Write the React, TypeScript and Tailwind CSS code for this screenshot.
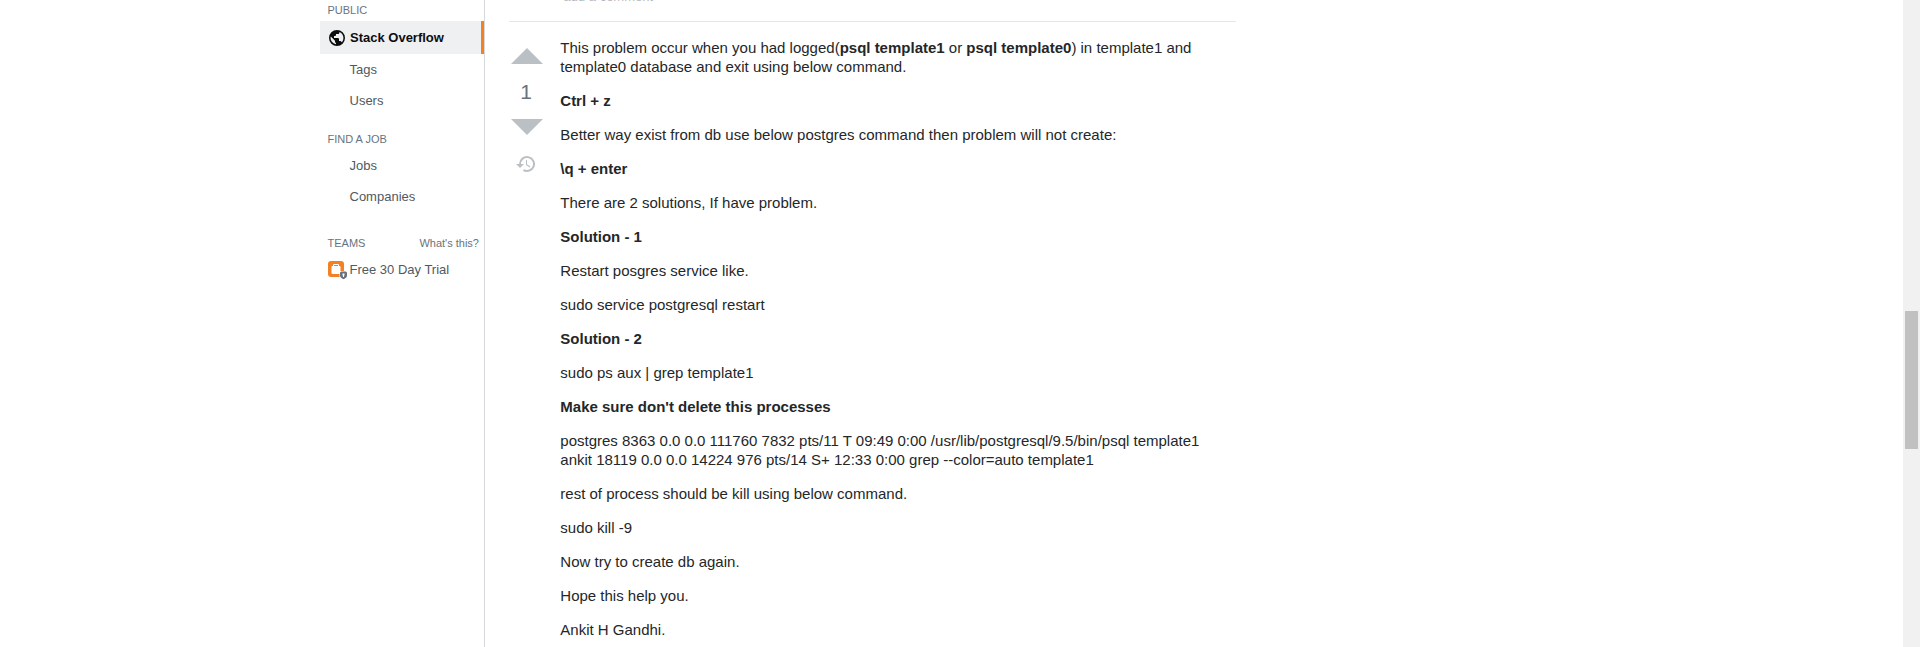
import type { ReactNode } from "react";

const answer: ReactNode[] = [
  <>
    This problem occur when you had logged(<b>psql template1</b> or <b>psql template0</b>) in template1 and
    <br />
    template0 database and exit using below command.
  </>,
  <b>Ctrl + z</b>,
  "Better way exist from db use below postgres command then problem will not create:",
  <b>\q + enter</b>,
  "There are 2 solutions, If have problem.",
  <b>Solution - 1</b>,
  "Restart posgres service like.",
  "sudo service postgresql restart",
  <b>Solution - 2</b>,
  "sudo ps aux | grep template1",
  <b>Make sure don't delete this processes</b>,
  <>
    postgres 8363 0.0 0.0 111760 7832 pts/11 T 09:49 0:00 /usr/lib/postgresql/9.5/bin/psql template1
    <br />
    ankit 18119 0.0 0.0 14224 976 pts/14 S+ 12:33 0:00 grep --color=auto template1
  </>,
  "rest of process should be kill using below command.",
  "sudo kill -9",
  "Now try to create db again.",
  "Hope this help you.",
  "Ankit H Gandhi.",
];

function NavLink({ children }: { children: ReactNode }) {
  return <a className="flex h-[31px] items-center pl-[29.5px] text-[13px] text-[#525960]">{children}</a>;
}

function Heading({ children }: { children: ReactNode }) {
  return <div className="pl-[7.5px] text-[11px] leading-[14px] text-[#6a737c]">{children}</div>;
}

function Sidebar() {
  return (
    <nav className="ml-80 flex w-[165px] shrink-0 flex-col border-r border-[#d6d9dc] pt-[3px]">
      <Heading>PUBLIC</Heading>
      <a className="mt-1 flex h-[33px] items-center gap-1 border-r-[3px] border-[#f48024] bg-[#eff0f1] pl-2 text-[13px] font-bold text-[#0c0d0e]">
        <svg width="18" height="18" viewBox="0 0 18 18" fill="currentColor">
          <path d="M9 1a8 8 0 100 16A8 8 0 009 1zM8 15.32a6.4 6.4 0 01-5.23-7.75L7 11.68v.8c0 .88.12 1.32 1 1.32v1.52zm5.72-2c-.2-.66-1-1.32-1.72-1.32h-1v-2c0-.44-.56-1-1-1H6V7h1c.44 0 1-.56 1-1V5h2c.88 0 1.4-.72 1.4-1.6v-.33a6.4 6.4 0 012.32 10.24z" />
        </svg>
        Stack Overflow
      </a>
      <NavLink>Tags</NavLink>
      <NavLink>Users</NavLink>
      <div className="mt-4">
        <Heading>FIND A JOB</Heading>
      </div>
      <div className="mt-1">
        <NavLink>Jobs</NavLink>
        <NavLink>Companies</NavLink>
      </div>
      <div className="mt-6 flex justify-between pr-[5px]">
        <Heading>TEAMS</Heading>
        <span className="text-[11px] leading-[14px] text-[#6a737c]">What's this?</span>
      </div>
      <a className="mt-2.5 flex h-5 items-center gap-[1.5px] pl-2 text-[13px] text-[#525960]">
        <svg width="20" height="20" viewBox="0 0 20 20">
          <rect y="1" width="16" height="16" rx="3" fill="#f48024" />
          <path d="M5.5 6V4.500h5V6" fill="none" stroke="#fff" />
          <rect x="3.500" y="6" width="9" height="8" rx="1" fill="#fff" />
          <path d="M11.500 11h8v5.500l-4 3.500-4-3.500z" fill="#fff" />
          <path d="M13.500 11.500h4a1.500 1.500 0 011.500 1.500v2.500c0 1.800-1.500 2.700-3.500 3.700-2-1-3.500-1.900-3.500-3.700V13a1.500 1.500 0 011.500-1.500z" fill="#6a737c" />
          <path d="M14.500 13.500h2v2h-.5v1.500h-1v-1.500h-.5z" fill="#fff" />
        </svg>
        Free 30 Day Trial
      </a>
    </nav>
  );
}

function Votes() {
  return (
    <div className="flex w-9 flex-col items-center pt-[26px] text-[#bbc0c4]">
      <svg width="32" height="16" viewBox="0 0 32 16" fill="currentColor">
        <path d="M0 16h32L16 0z" />
      </svg>
      <span className="my-[15px] pr-[2px] text-[21px] leading-[25px] text-[#6a737c]">1</span>
      <svg width="32" height="16" viewBox="0 0 32 16" fill="currentColor">
        <path d="M0 0h32L16 16z" />
      </svg>
      <svg className="mt-5 mr-[3px]" width="19" height="18" viewBox="0 0 19 18" fill="currentColor">
        <path d="M3 9a8 8 0 113.73 6.77L8.2 14.3A6 6 0 105 9l3.01-.01-4 4-4-4h3zm7-4h1.01L11 9.36l3.22 2.1-.6.93L10 10V5z" />
      </svg>
    </div>
  );
}

export default function App() {
  return (
    <div className="flex h-[647px] overflow-hidden bg-white font-['Liberation_Sans',Arial,sans-serif]">
      <Sidebar />
      <main className="ml-6 w-[727px]">
        <div className="flex h-[21px] items-start pl-[54.5px] text-[13px] leading-[15px] text-[#848d95] opacity-60">
          <span className="-mt-[11px]">add a comment</span>
        </div>
        <div className="flex border-t border-[#e4e6e8]">
          <Votes />
          <div className="ml-[15.3px] flex flex-col gap-[15px] pt-4 text-[15px] leading-[19px] whitespace-nowrap text-[#242729]">
            {answer.map((text, i) => (
              <p key={i}>{text}</p>
            ))}
          </div>
        </div>
      </main>
      <div className="ml-auto w-[17px] bg-[#f1f1f1] px-0.5 pt-[311px]">
        <div className="h-[138px] bg-[#c1c1c1]" />
      </div>
    </div>
  );
}
